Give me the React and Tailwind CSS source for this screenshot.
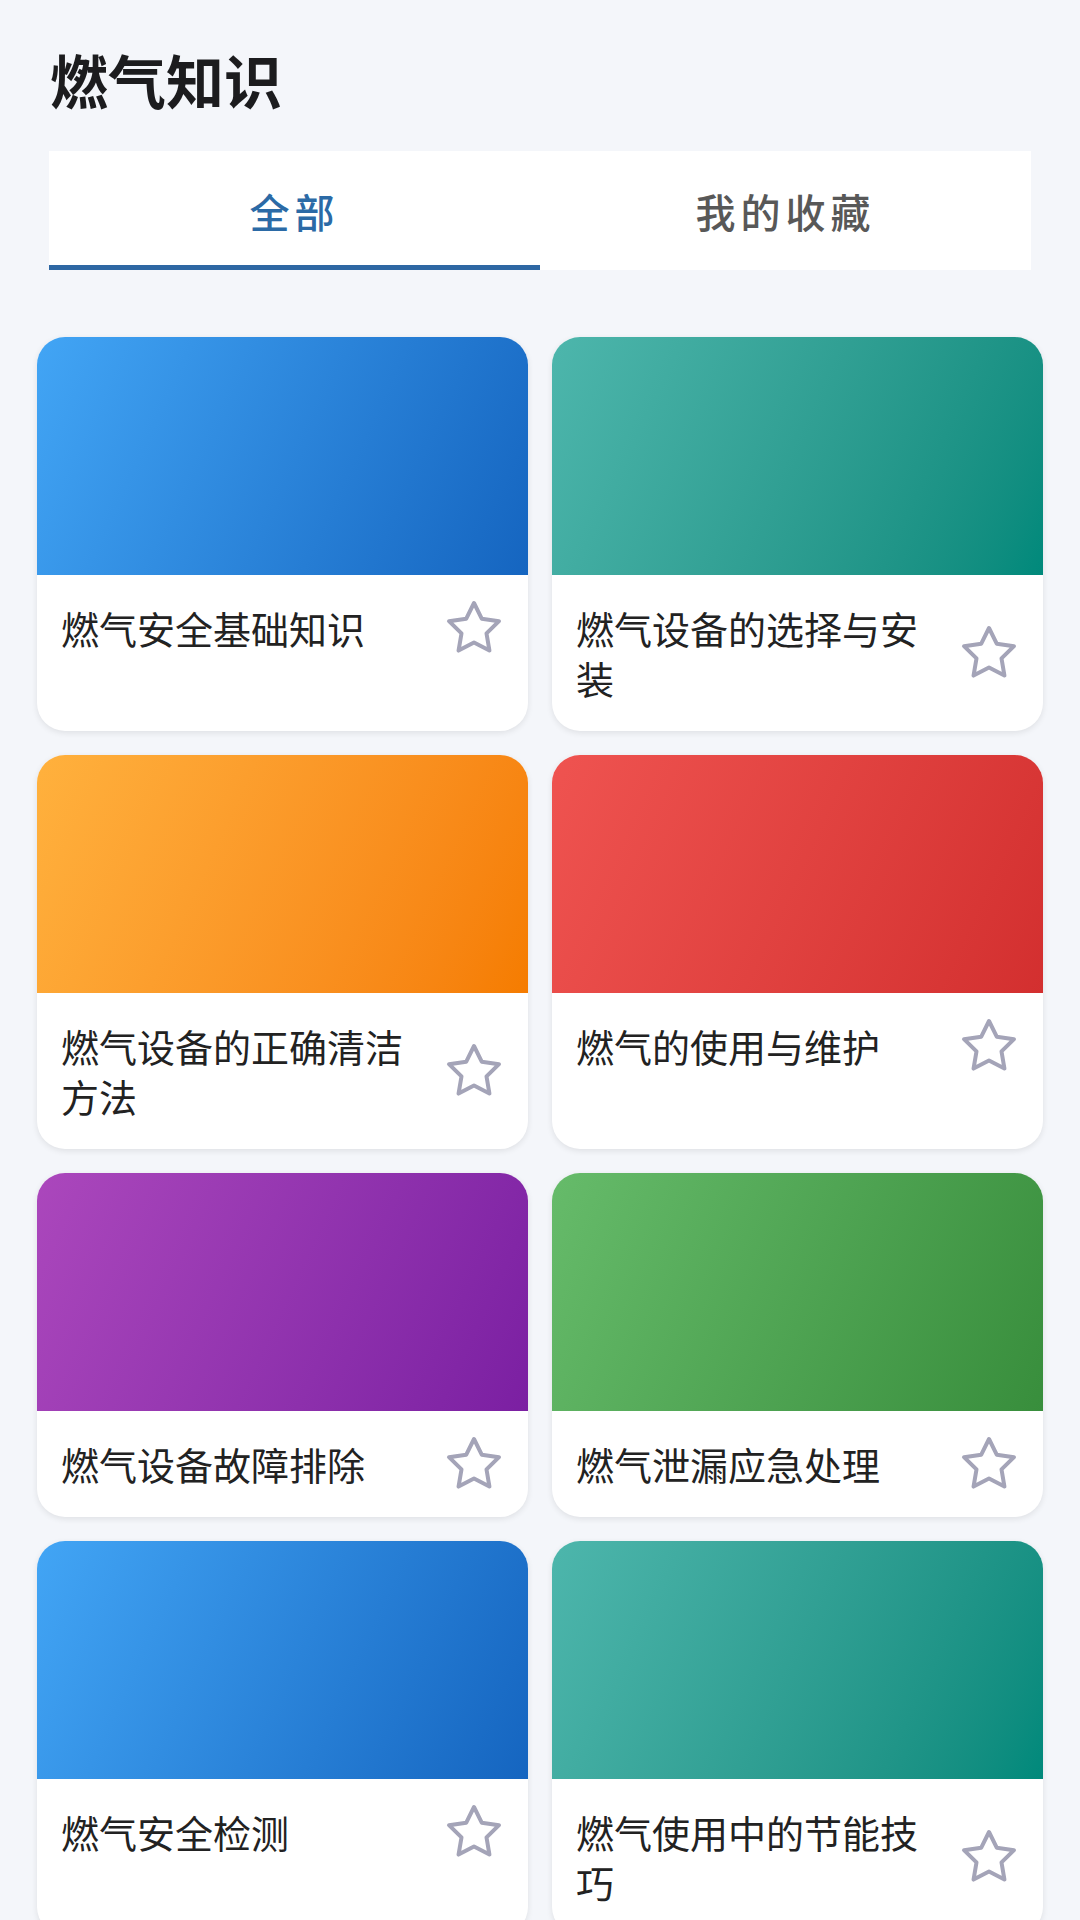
import { useState } from 'react';

const ARTICLES = [
  { id: 1, title: '燃气安全基础知识', grad: 'from-[#42a5f5] to-[#1565c0]' },
  { id: 2, title: '燃气设备的选择与安装', grad: 'from-[#4db6ac] to-[#00897b]' },
  { id: 3, title: '燃气设备的正确清洁方法', grad: 'from-[#ffb13d] to-[#f57c00]' },
  { id: 4, title: '燃气的使用与维护', grad: 'from-[#ef5350] to-[#d32f2f]' },
  { id: 5, title: '燃气设备故障排除', grad: 'from-[#ab47bc] to-[#7b1fa2]' },
  { id: 6, title: '燃气泄漏应急处理', grad: 'from-[#66bb6a] to-[#388e3c]' },
  { id: 7, title: '燃气安全检测', grad: 'from-[#42a5f5] to-[#1565c0]' },
  { id: 8, title: '燃气使用中的节能技巧', grad: 'from-[#4db6ac] to-[#00897b]' },
];

function StarIcon() {
  return (
    <svg viewBox="0 0 24 24" className="-my-[5px] h-[60px] w-[60px] shrink-0" fill="none" stroke="#a4a4b8" strokeWidth="1.6" strokeLinejoin="round">
      <polygon points="12,2 15.09,8.26 22,9.27 17,14.14 18.18,21.02 12,17.77 5.82,21.02 7,14.14 2,9.27 8.91,8.26" />
    </svg>
  );
}

function ArticleCard({ item }) {
  return (
    <div className="overflow-hidden rounded-[28px] bg-white shadow-[0_2px_6px_rgba(0,0,0,0.09)]">
      <div className={`h-[238px] bg-linear-115 ${item.grad}`} />
      <div className="flex items-center gap-[20px] pt-[28px] pb-[28px] pl-[24px] pr-[24px]">
        <p className="min-w-0 flex-1 text-[38px] leading-[50px] text-[#222]">{item.title}</p>
        <StarIcon />
      </div>
    </div>
  );
}

export default function App() {
  const [tab, setTab] = useState(0);
  const tabs = ['全部', '我的收藏'];

  return (
    <div className="min-h-screen bg-[#f4f6fa] pb-[40px] font-['Noto_Sans_CJK_SC','Noto_Sans',sans-serif]">
      <h1 className="px-[50px] pt-[48px] text-[58px] font-bold leading-[62px] text-[#1c1c1e]">燃气知识</h1>

      {/* 分类标签 */}
      <div className="mx-[49px] mt-[41px] flex h-[119px] bg-white">
        {tabs.map((t, i) => (
          <button
            key={t}
            onClick={() => setTab(i)}
            className={`flex flex-1 items-center justify-center border-b-[5px] pt-[5px] text-[40px] font-medium tracking-[5px] ${
              tab === i ? 'border-[#2e67a3] text-[#2b6aa6]' : 'border-transparent text-[#585858]'
            }`}
          >
            {t}
          </button>
        ))}
      </div>

      <div className="mt-[67px] grid grid-cols-2 gap-[24px] px-[37px]">
        {ARTICLES.map((a) => (
          <ArticleCard key={a.id} item={a} />
        ))}
      </div>
    </div>
  );
}
